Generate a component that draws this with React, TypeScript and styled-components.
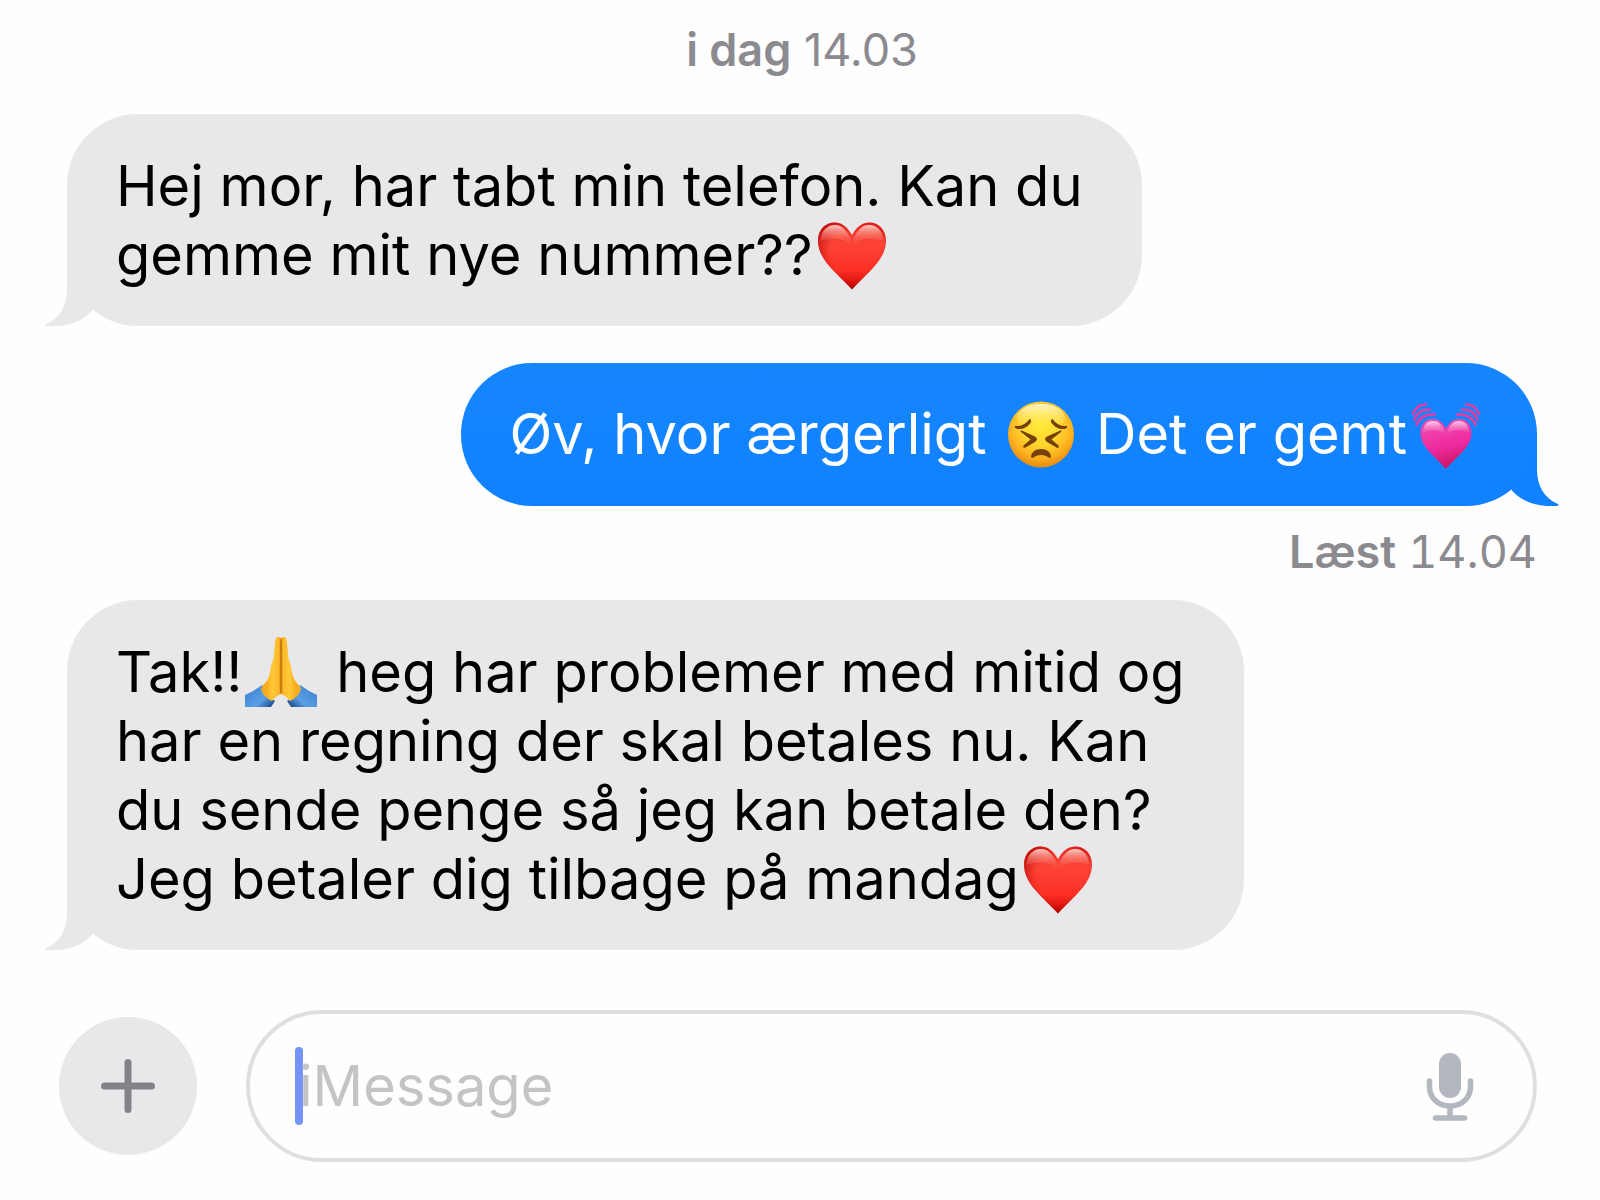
import React, { useId } from "react";
import styled, { createGlobalStyle } from "styled-components";

const GlobalStyle = createGlobalStyle`
  * { box-sizing: border-box; }
  body {
    margin: 0;
    background: #fefefe;
    font-family: Inter, "Liberation Sans", sans-serif;
    font-optical-sizing: auto;
  }
`;

type Side = "in" | "out";

const Page = styled.main`
  display: flex;
  flex-direction: column;
  padding: 23px 63px 38px 67px;
`;

const Stamp = styled.time`
  align-self: center;
  margin-bottom: 37px;
  font-size: 45px;
  line-height: 54px;
  color: #8a8a8f;
  b { font-weight: 600; }
`;

const Receipt = styled(Stamp)`
  align-self: flex-end;
  margin: 19px 0 21px;
  font-variant-numeric: tabular-nums;
`;

const Bubble = styled.div<{ $side: Side }>`
  position: relative;
  align-self: ${(p) => (p.$side === "in" ? "flex-start" : "flex-end")};
  padding: ${(p) => (p.$side === "in" ? "38px 59px 36px 49px" : "37px 52px 37px 48px")};
  border-radius: 71px;
  background: ${(p) => (p.$side === "in" ? "#e8e8ea" : "linear-gradient(#1686ff, #1081ff)")};
  color: ${(p) => (p.$side === "in" ? "#000" : "#fff")};
  font-size: 56px;
  line-height: 69px;
  & + & { margin-top: 37px; }
`;

const TailShape = styled.svg<{ $side: Side }>`
  position: absolute;
  bottom: 0;
  ${(p) => (p.$side === "in" ? "left: -22px;" : "right: -22px; transform: scaleX(-1);")}
  width: 48px;
  height: 72px;
  fill: ${(p) => (p.$side === "in" ? "#e8e8ea" : "#1081ff")};
`;

const Emoji = styled.svg`
  width: 74px;
  height: 74px;
  margin: -4px 2px;
  vertical-align: -13px;
`;

const Composer = styled.form`
  display: flex;
  align-items: center;
  gap: 49px;
  margin: 60px 0 0 -8px;
`;

const PlusButton = styled.button`
  display: grid;
  place-items: center;
  flex: none;
  width: 138px;
  height: 138px;
  padding: 0;
  border: 0;
  border-radius: 50%;
  background: #e7e8ea;
`;

const Field = styled.div`
  display: flex;
  align-items: center;
  flex: 1;
  min-width: 0;
  height: 152px;
  padding: 0 59px 0 45px;
  border: 4px solid #dfdfdf;
  border-radius: 76px;
`;

const Caret = styled.span`
  flex: none;
  width: 8px;
  height: 78px;
  border-radius: 4px;
  background: #7594fa;
`;

const TextBox = styled.input`
  flex: 1;
  min-width: 0;
  height: 78px;
  margin-left: -4px;
  padding: 0;
  border: 0;
  outline: 0;
  background: transparent;
  font: inherit;
  font-size: 56px;
  color: #000;
  &::placeholder { color: #c4c4c6; opacity: 1; }
`;

const MicButton = styled.button`
  display: flex;
  flex: none;
  padding: 0;
  border: 0;
  background: none;
`;

function Tail({ side }: { side: Side }) {
  return (
    <TailShape $side={side} viewBox="0 0 48 72" aria-hidden="true">
      <path d="M22 0V36C22 52 14 65 1 70Q-1 72 4 72C24 73 38 67 47.500 56Z" />
    </TailShape>
  );
}

function RedHeart() {
  const id = useId();
  return (
    <Emoji viewBox="0 0 74 74" role="img" aria-label="Rødt hjerte">
      <defs>
        <linearGradient id={id + "a"} x1="0" y1="4" x2="0" y2="72" gradientUnits="userSpaceOnUse">
          <stop offset="0" stopColor="#e5261c" />
          <stop offset="0.3" stopColor="#fb4436" />
          <stop offset="0.7" stopColor="#fd3025" />
          <stop offset="0.88" stopColor="#e0170f" />
          <stop offset="1" stopColor="#a80a06" />
        </linearGradient>
        <radialGradient id={id + "c"} cx="42" cy="34" r="42" gradientUnits="userSpaceOnUse">
          <stop offset="0.65" stopColor="#b30603" stopOpacity="0" />
          <stop offset="1" stopColor="#b30603" stopOpacity="0.7" />
        </radialGradient>
        <linearGradient id={id + "b"} x1="0" y1="6" x2="0" y2="26" gradientUnits="userSpaceOnUse">
          <stop offset="0" stopColor="#ffe0dc" stopOpacity="0.95" />
          <stop offset="1" stopColor="#ff7a6c" stopOpacity="0.05" />
        </linearGradient>
        <path
          id={id + "h"}
          d="M37 17C32 8 26 4.500 20 4.500C10 4.500 3 12 3 22.500C3 42 21 54 37 71.500C53 54 71 42 71 22.500C71 12 64 4.500 54 4.500C48 4.500 42 8 37 17Z"
        />
      </defs>
      <use href={`#${id}h`} fill={`url(#${id}a)`} />
      <use href={`#${id}h`} fill={`url(#${id}c)`} />
      <path
        d="M36 21C31 11 26 7 20 7C12 7 6 13 5.500 23C13 20 28 19 36 26ZM38 21C43 11 48 7 54 7C62 7 68 13 68.500 23C61 20 46 19 38 26Z"
        fill={`url(#${id}b)`}
      />
    </Emoji>
  );
}

function PerseveringFace() {
  const id = useId();
  return (
    <Emoji viewBox="0 0 74 74" role="img" aria-label="Anstrengt ansigt">
      <defs>
        <radialGradient id={id + "a"} cx="37" cy="29" r="43" gradientUnits="userSpaceOnUse">
          <stop offset="0" stopColor="#ffea35" />
          <stop offset="0.45" stopColor="#ffd52d" />
          <stop offset="0.75" stopColor="#fdb01f" />
          <stop offset="1" stopColor="#e2830a" />
        </radialGradient>
        <linearGradient id={id + "b"} x1="0" y1="6" x2="0" y2="32" gradientUnits="userSpaceOnUse">
          <stop offset="0" stopColor="#fff" stopOpacity="0.8" />
          <stop offset="1" stopColor="#fff35c" stopOpacity="0" />
        </linearGradient>
      </defs>
      <circle cx="37" cy="37.500" r="33" fill={`url(#${id}a)`} />
      <ellipse cx="37" cy="21" rx="24" ry="14" fill={`url(#${id}b)`} />
      <g fill="#76400a">
        <path d="M11 29Q20 30 25.500 22Q28 22.500 26.500 26Q20 34 12 31.500Q10 30 11 29Z" />
        <path d="M63 29Q54 30 48.500 22Q46 22.500 47.500 26Q54 34 62 31.500Q64 30 63 29Z" />
        <path d="M16.500 33L31 39.500Q35 42 31 45L20.500 51Q18 50 20 48L26.500 42.500L17 35Z" />
        <path d="M57.500 33L43 39.500Q39 42 43 45L53.500 51Q56 50 54 48L47.500 42.500L57 35Z" />
        <path d="M27 60Q28 52 37 52Q46 52 47 60Q46 62 44 60Q37 56 30 60Q28 62 27 60Z" />
      </g>
    </Emoji>
  );
}

function BeatingHeart() {
  const id = useId();
  return (
    <Emoji viewBox="0 0 74 74" role="img" aria-label="Bankende hjerte">
      <defs>
        <linearGradient id={id + "a"} x1="30" y1="22" x2="42" y2="72" gradientUnits="userSpaceOnUse">
          <stop offset="0" stopColor="#f04cae" />
          <stop offset="0.55" stopColor="#ee2a9f" />
          <stop offset="1" stopColor="#c8135c" />
        </linearGradient>
        <linearGradient id={id + "b"} x1="0" y1="23" x2="0" y2="38" gradientUnits="userSpaceOnUse">
          <stop offset="0" stopColor="#fff" stopOpacity="0.85" />
          <stop offset="1" stopColor="#f783cc" stopOpacity="0" />
        </linearGradient>
      </defs>
      <path
        d="M37 32C34 25 29 22 24 22C16 22 11.500 28 11.500 36C11.500 50 25 58 37 72C49 58 62.500 50 62.500 36C62.500 28 58 22 50 22C45 22 40 25 37 32Z"
        fill={`url(#${id}a)`}
      />
      <path
        d="M36 35C33 27 29 24 24 24C18 24 14 28 14 36C20 32 31 32 36 38ZM38 35C41 27 45 24 50 24C56 24 60 28 60 36C54 32 43 32 38 38Z"
        fill={`url(#${id}b)`}
      />
      <g fill="none" stroke="#e83a9f" strokeWidth="2.400" strokeLinecap="round">
        <path d="M4 17Q8 7 17 7.500" />
        <path d="M5.500 23Q9 12 21 12.500" />
        <path d="M7.500 28Q11 17 26 17.500" />
        <path d="M70 17Q66 7 57 7.500" />
        <path d="M68.500 23Q65 12 53 12.500" />
        <path d="M66.500 28Q63 17 48 17.500" />
      </g>
    </Emoji>
  );
}

function FoldedHands() {
  const id = useId();
  return (
    <Emoji viewBox="0 0 74 74" role="img" aria-label="Foldede hænder">
      <defs>
        <linearGradient id={id + "a"} x1="22" y1="0" x2="37" y2="0" gradientUnits="userSpaceOnUse">
          <stop offset="0" stopColor="#f5ac1e" />
          <stop offset="0.45" stopColor="#ffc938" />
          <stop offset="0.85" stopColor="#fdb92a" />
          <stop offset="1" stopColor="#d58a12" />
        </linearGradient>
        <linearGradient id={id + "b"} x1="8" y1="52" x2="28" y2="74" gradientUnits="userSpaceOnUse">
          <stop offset="0" stopColor="#3f86d3" />
          <stop offset="0.55" stopColor="#5b9fe6" />
          <stop offset="1" stopColor="#123a78" />
        </linearGradient>
        <g id={id + "c"}>
          <path d="M1 60Q10 56 18 50Q22 60 31 66Q29 69 27 72H1Z" fill={`url(#${id}b)`} />
          <path
            d="M37 3Q31.500 -0.500 31 7L29.500 24Q26.500 29 26.500 35Q25 43 22 47Q17 52 17 54Q19 62 28 66Q33 60 37 59Z"
            fill={`url(#${id}a)`}
          />
        </g>
      </defs>
      <use href={`#${id}c`} />
      <use href={`#${id}c`} transform="translate(74 0) scale(-1 1)" />
      <path d="M37 5V58" stroke="#c27607" strokeWidth="1.500" />
    </Emoji>
  );
}

export default function App() {
  return (
    <>
      <GlobalStyle />
      <Page>
        <Stamp dateTime="14:03">
          <b>i dag</b> 14.03
        </Stamp>
        <Bubble $side="in">
          Hej mor, har tabt min telefon. Kan du
          <br />
          gemme mit nye nummer??
          <RedHeart />
          <Tail side="in" />
        </Bubble>
        <Bubble $side="out">
          Øv, hvor ærgerligt <PerseveringFace /> Det er gemt
          <BeatingHeart />
          <Tail side="out" />
        </Bubble>
        <Receipt dateTime="14:04">
          <b>Læst</b> 14.04
        </Receipt>
        <Bubble $side="in">
          Tak!!
          <FoldedHands /> heg har problemer med mitid og
          <br />
          har en regning der skal betales nu. Kan
          <br />
          du sende penge så jeg kan betale den?
          <br />
          Jeg betaler dig tilbage på mandag
          <RedHeart />
          <Tail side="in" />
        </Bubble>
        <Composer onSubmit={(e) => e.preventDefault()}>
          <PlusButton type="button" aria-label="Tilføj">
            <svg width="54" height="54" viewBox="0 0 54 54" stroke="#818389" strokeWidth="7" strokeLinecap="round">
              <path d="M27 3.500V50.500M3.500 27H50.500" />
            </svg>
          </PlusButton>
          <Field>
            <Caret />
            <TextBox type="text" placeholder="iMessage" aria-label="iMessage" />
            <MicButton type="button" aria-label="Diktér">
              <svg width="48" height="70" viewBox="0 -2 48 70" fill="none" stroke="#b3b8c0" strokeLinecap="round">
                <rect x="13" y="0" width="22" height="45" rx="11" fill="#b3b8c0" stroke="none" />
                <path d="M3.500 28V33.500C3.500 45 12 53 24 53C36 53 44.500 45 44.500 33.500V28M24 53V65M9.500 65H38.500" strokeWidth="5.500" />
              </svg>
            </MicButton>
          </Field>
        </Composer>
      </Page>
    </>
  );
}
